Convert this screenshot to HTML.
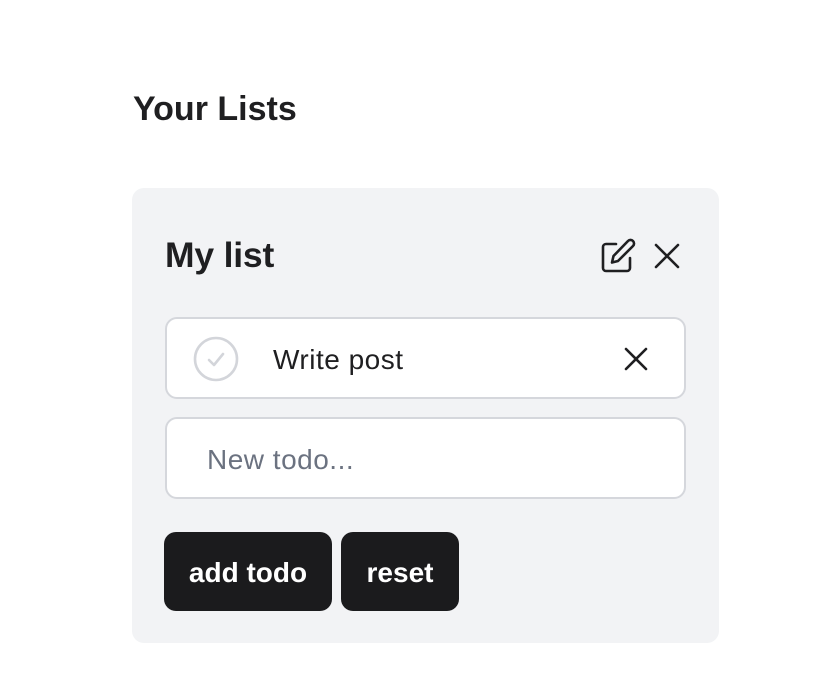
<!DOCTYPE html>
<html><head><style>
html,body{margin:0;padding:0;background:#fff;width:826px;height:686px;overflow:hidden;font-family:"Liberation Sans",sans-serif;color:#1f1f21}
.h{position:absolute;left:133px;top:90px;font-size:34px;font-weight:bold;letter-spacing:0}
.card{position:absolute;left:132px;top:188px;width:587px;height:455px;background:#f2f3f5;border-radius:12px}
.t{position:absolute;left:33px;top:47px;font-size:35.5px;font-weight:bold;letter-spacing:-0.2px}
.box{position:absolute;left:33px;width:517px;height:78px;background:#fff;border:2px solid #d5d7dc;border-radius:12px}
.btn{position:absolute;top:344px;height:79px;background:#1b1b1d;color:#fff;border-radius:12px;font-size:28px;font-weight:bold;line-height:82px;text-align:center}
</style></head><body>
<div class="h">Your Lists</div>
<div class="card">
<div class="t">My list</div>
<svg style="position:absolute;left:468px;top:50px" width="36" height="36" viewBox="0 0 36 36" fill="none" stroke="#1f1f21" stroke-width="2.6" stroke-linecap="round" stroke-linejoin="round"><path d="M16 6H6a3 3 0 0 0-3 3v21a3 3 0 0 0 3 3h21a3 3 0 0 0 3-3V20"/><path d="M28 3a3.5 3.5 0 0 1 5 5L18 23l-6 1.5L13.5 18z"/></svg>
<svg style="position:absolute;left:522px;top:55px" width="26" height="26" viewBox="0 0 26 26" stroke="#1f1f21" stroke-width="2.6" stroke-linecap="round"><path d="M2 2L24 24M24 2L2 24"/></svg>
<div class="box" style="top:129px">
<svg style="position:absolute;left:26px;top:17px" width="46" height="46" viewBox="0 0 46 46" fill="none" stroke="#d3d5da" stroke-width="2.6"><circle cx="23" cy="23" r="21"/><path d="M16 24l5 5 9-11" stroke-linecap="round" stroke-linejoin="round"/></svg>
<div style="position:absolute;left:106px;top:25px;font-size:28px;letter-spacing:0.5px">Write post</div>
<svg style="position:absolute;left:457px;top:28px" width="24" height="24" viewBox="0 0 24 24" stroke="#1f1f21" stroke-width="2.6" stroke-linecap="round"><path d="M2 2L22 22M22 2L2 22"/></svg>
</div>
<div class="box" style="top:229px"><div style="position:absolute;left:40px;top:25px;font-size:28px;letter-spacing:0.5px;color:#6b7280">New todo...</div></div>
<div class="btn" style="left:32px;width:168px">add todo</div>
<div class="btn" style="left:209px;width:118px">reset</div>
</div>
</body></html>
